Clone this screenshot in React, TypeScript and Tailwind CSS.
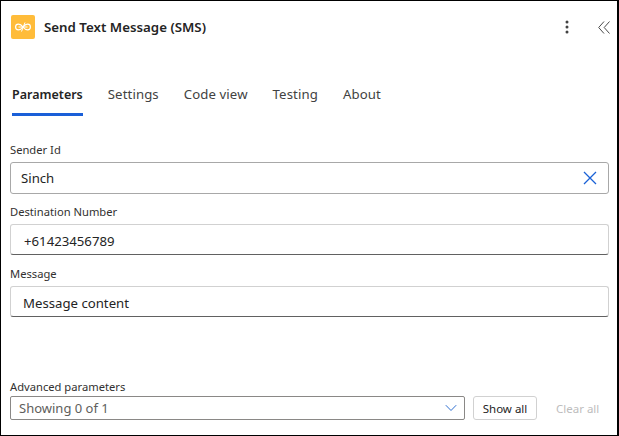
import React from 'react';

const tabs = ['Parameters', 'Settings', 'Code view', 'Testing', 'About'];

function FieldLabel({ children }: { children: React.ReactNode }) {
  return <label className="block text-[11.2px] leading-[16px] text-[#323130]">{children}</label>;
}

function TextField({ value, pad }: { value: string; pad: string }) {
  return (
    <div className={`flex h-[31px] items-center rounded-[3px] border border-[#d1d1d1] border-b-[#616161] pt-[5px] text-[13.2px] text-[#242424] ${pad}`}>
      {value}
    </div>
  );
}

export default function App() {
  return (
    <div className="flex h-[436px] w-[619px] flex-col border-t border-r-2 border-b border-l border-black bg-white font-['Noto_Sans',sans-serif] text-[#242424]">
      {/* Header */}
      <div className="flex h-[52px] items-center pl-[10px] pr-[7px]">
        <div className="flex h-[24px] w-[24px] items-center justify-center rounded-[2px] bg-[#ffbc3a]">
          <svg width="18" height="10" viewBox="0 0 18 10" fill="none" stroke="#fff" strokeWidth="1.2">
            <path d="M9 5C7.500 3 6 2.200 4.400 2.200a2.800 2.800 0 0 0 0 5.600C6 7.800 7.500 7 9 5c1.500-2 3-2.800 4.600-2.800a2.800 2.800 0 0 1 0 5.600C12 7.800 10.500 7 9 5Z" />
            <path d="M4.500 5h9M11 .5 7.500 9.500" strokeWidth="1" />
          </svg>
        </div>
        <h1 className="ml-[9px] pt-[1px] text-[13.3px] font-semibold text-[#242424]">Send Text Message (SMS)</h1>
        <div className="ml-auto flex items-center gap-[29px]">
          <svg width="4" height="14" viewBox="0 0 4 14" fill="#424242">
            <circle cx="2" cy="2" r="1.500" />
            <circle cx="2" cy="7" r="1.500" />
            <circle cx="2" cy="12" r="1.500" />
          </svg>
          <svg width="12" height="13" viewBox="0 0 12 13" fill="none" stroke="#4a4a4a" strokeWidth="1">
            <path d="M6 .5.7 6.500 6 12.500M11.500.5 6.200 6.500l5.300 6" />
          </svg>
        </div>
      </div>

      {/* Tabs */}
      <div className="mt-[26px] flex gap-[25px] pl-[11px]">
        {tabs.map((tab, i) => (
          <div
            key={tab}
            className={`h-[37px] leading-[24px] ${
              i === 0
                ? 'border-b-[3px] border-[#1a5fd8] pt-[4px] text-[12.5px] font-semibold text-[#242424]'
                : 'pt-[3px] text-[13.2px] tracking-[0.1px] text-[#424242]'
            }`}
          >
            {tab}
          </div>
        ))}
      </div>

      {/* Parameters */}
      <div className="flex flex-1 flex-col pr-[8px] pl-[9px] pt-[26px]">
        <FieldLabel>Sender Id</FieldLabel>
        <div className="mt-[4px] flex h-[32px] items-center justify-between rounded-[3px] border border-[#a8a8a8] pr-[10px] pl-[10px] text-[13.2px] text-[#242424]">
          <span className="pt-[1px]">Sinch</span>
          <svg width="16" height="16" viewBox="0 0 16 16" fill="none" stroke="#1a62d6" strokeWidth="1.300">
            <path d="M2 2l12 12M14 2 2 14" />
          </svg>
        </div>

        <div className="mt-[10px]">
          <FieldLabel>Destination Number</FieldLabel>
        </div>
        <div className="mt-[4px]">
          <TextField value="+61423456789" pad="pl-[13px]" />
        </div>

        <div className="mt-[11px]">
          <FieldLabel>Message</FieldLabel>
        </div>
        <div className="mt-[4px]">
          <TextField value="Message content" pad="pl-[12px]" />
        </div>

        {/* Advanced parameters */}
        <div className="mt-auto mb-[15px]">
          <FieldLabel>Advanced parameters</FieldLabel>
          <div className="mt-[1px] flex items-center">
            <div className="flex h-[24px] w-[455px] items-center justify-between rounded-[2px] border border-[#8a8886] pr-[7px] pl-[8px] text-[13px] text-[#605e5c]">
              <span className="pt-[1px]">Showing 0 of 1</span>
              <svg width="12" height="8" viewBox="0 0 12 8" fill="none" stroke="#2f6fd0" strokeWidth="1">
                <path d="M.8 1.200 6 6.500l5.200-5.300" />
              </svg>
            </div>
            <button className="ml-[8px] h-[24px] w-[64px] rounded-[3px] border border-[#d1d1d1] pt-[1px] text-[11.5px] text-[#242424]">
              Show all
            </button>
            <span className="ml-[19px] pt-[1px] text-[11.5px] text-[#bdbdbd]">Clear all</span>
          </div>
        </div>
      </div>
    </div>
  );
}
